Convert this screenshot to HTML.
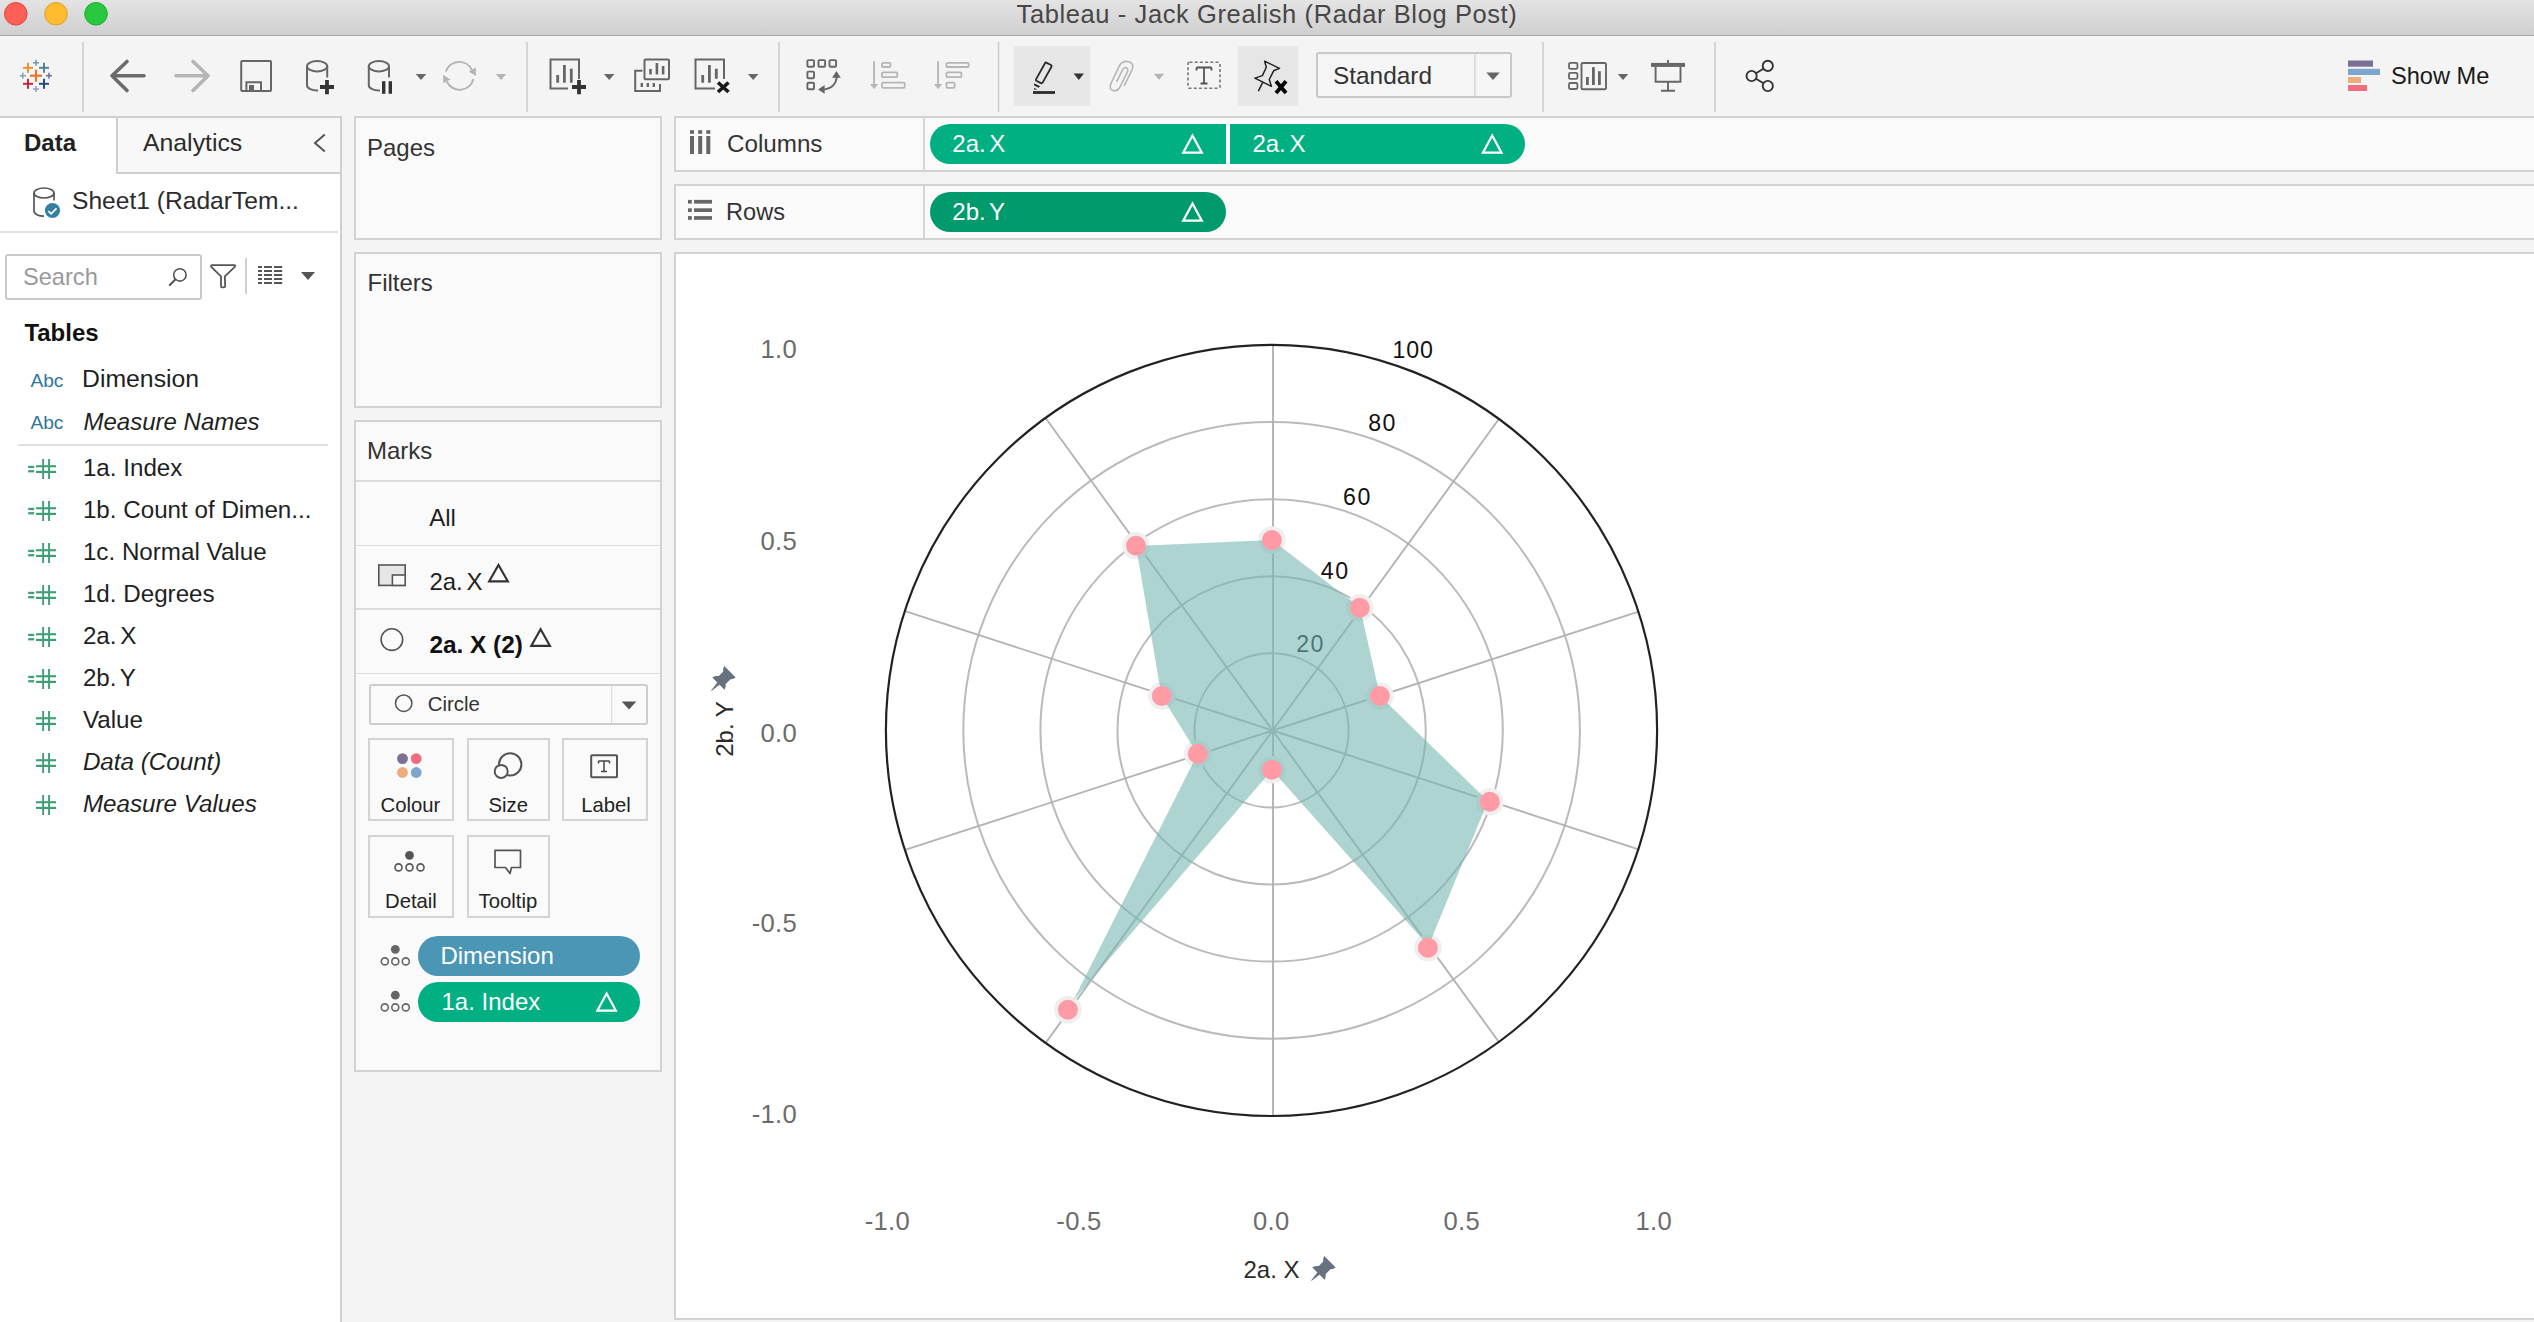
<!DOCTYPE html>
<html><head><meta charset="utf-8"><title>Tableau - Jack Grealish (Radar Blog Post)</title>
<style>
html,body{margin:0;padding:0;width:2534px;height:1322px;overflow:hidden;background:#f4f4f4;}
body{position:relative;font-family:"Liberation Sans", sans-serif;}
.a{position:absolute;}
.t{position:absolute;white-space:pre;font-family:"Liberation Sans", sans-serif;}
svg.ov{position:absolute;left:0;top:0;}
</style></head><body>

<div class="a" style="left:0;top:0;width:2534px;height:35px;background:linear-gradient(#e4e4e4,#cfcfcf);"></div>
<div class="a" style="left:0px;top:35px;width:2534px;height:1px;background:#a9a9a9;"></div>
<div class="a" style="left:0px;top:36px;width:2534px;height:80px;background:#f4f4f4;"></div>
<div class="a" style="left:0px;top:118px;width:2534px;height:1204px;background:#f4f4f4;"></div>
<div class="a" style="left:1014px;top:46px;width:76px;height:60px;background:#e6e6e6;"></div>
<div class="a" style="left:1238px;top:46px;width:60px;height:60px;background:#e6e6e6;"></div>
<div class="a" style="left:1315.8px;top:52px;width:196px;height:46px;background:#f5f5f5;box-sizing:border-box;border:2px solid #c8c8c8;border-radius:3px;"></div>
<div class="a" style="left:1474.2px;top:54px;width:1.5px;height:42px;background:#dddddd;"></div>
<div class="a" style="left:0px;top:118px;width:340px;height:1204px;background:#ffffff;"></div>
<div class="a" style="left:116px;top:116px;width:226px;height:58px;background:#f8f8f8;"></div>
<div class="a" style="left:116px;top:116px;width:2px;height:58px;background:#cfcfcf;"></div>
<div class="a" style="left:116px;top:172px;width:226px;height:2px;background:#cfcfcf;"></div>
<div class="a" style="left:340px;top:116px;width:2px;height:1206px;background:#cfcfcf;"></div>
<div class="a" style="left:0px;top:116px;width:342px;height:2px;background:#cfcfcf;"></div>
<div class="a" style="left:0px;top:231px;width:338px;height:2px;background:#e2e2e2;"></div>
<div class="a" style="left:4.5px;top:254px;width:197.5px;height:46px;background:#ffffff;box-sizing:border-box;border:2px solid #c9c9c9;border-radius:3px;"></div>
<div class="a" style="left:245px;top:258.2px;width:2px;height:35.6px;background:#d0d0d0;"></div>
<div class="a" style="left:18px;top:444px;width:310px;height:2px;background:#e0e0e0;"></div>
<div class="a" style="left:354px;top:116px;width:308px;height:124px;background:#fafafa;box-sizing:border-box;border:2px solid #d2d2d2;"></div>
<div class="a" style="left:354px;top:252px;width:308px;height:156px;background:#fafafa;box-sizing:border-box;border:2px solid #d2d2d2;"></div>
<div class="a" style="left:354px;top:420px;width:308px;height:652px;background:#fafafa;box-sizing:border-box;border:2px solid #d2d2d2;"></div>
<div class="a" style="left:356px;top:480px;width:304px;height:1.5px;background:#dcdcdc;"></div>
<div class="a" style="left:356px;top:544.5px;width:304px;height:1.5px;background:#dcdcdc;"></div>
<div class="a" style="left:356px;top:608.3px;width:304px;height:1.5px;background:#dcdcdc;"></div>
<div class="a" style="left:356px;top:672.5px;width:304px;height:1.5px;background:#dcdcdc;"></div>
<div class="a" style="left:368.5px;top:684px;width:279px;height:41px;background:#fafafa;box-sizing:border-box;border:2px solid #cdcdcd;border-radius:3px;"></div>
<div class="a" style="left:610.5px;top:686px;width:1.5px;height:37px;background:#dadada;"></div>
<div class="a" style="left:368.4px;top:738.4px;width:85.2px;height:83px;background:#fafafa;box-sizing:border-box;border:2px solid #d4d4d4;"></div>
<div class="a" style="left:466.5px;top:738.4px;width:83.3px;height:83px;background:#fafafa;box-sizing:border-box;border:2px solid #d4d4d4;"></div>
<div class="a" style="left:562.4px;top:738.4px;width:85.4px;height:83px;background:#fafafa;box-sizing:border-box;border:2px solid #d4d4d4;"></div>
<div class="a" style="left:368.4px;top:834.6px;width:85.2px;height:83px;background:#fafafa;box-sizing:border-box;border:2px solid #d4d4d4;"></div>
<div class="a" style="left:466.5px;top:834.6px;width:83.3px;height:83px;background:#fafafa;box-sizing:border-box;border:2px solid #d4d4d4;"></div>
<div class="a" style="left:418px;top:936.3px;width:222px;height:39.5px;background:#4a96b4;border-radius:20px;"></div>
<div class="a" style="left:418px;top:982.3px;width:222px;height:39.5px;background:#00b082;border-radius:20px;"></div>
<div class="a" style="left:674px;top:116px;width:1860px;height:56px;background:#fafafa;box-sizing:border-box;border:2px solid #d2d2d2;border-right:none;"></div>
<div class="a" style="left:923px;top:118px;width:1.5px;height:52px;background:#d6d6d6;"></div>
<div class="a" style="left:674px;top:184px;width:1860px;height:56px;background:#fafafa;box-sizing:border-box;border:2px solid #d2d2d2;border-right:none;"></div>
<div class="a" style="left:923px;top:186px;width:1.5px;height:52px;background:#d6d6d6;"></div>
<div class="a" style="left:930px;top:124px;width:295.6px;height:40px;background:#00b082;border-radius:20px 0 0 20px;"></div>
<div class="a" style="left:1230px;top:124px;width:295.4px;height:40px;background:#00b082;border-radius:0 20px 20px 0;"></div>
<div class="a" style="left:930px;top:192px;width:295.6px;height:40px;background:#009a6d;border-radius:20px;"></div>
<div class="a" style="left:674px;top:252px;width:1860px;height:1068px;background:#ffffff;box-sizing:border-box;border:2px solid #d2d2d2;border-right:none;"></div>
<svg class="ov" width="2534" height="1322" viewBox="0 0 2534 1322">
<circle cx="15.8" cy="13.8" r="11.3" fill="#fe5f57" stroke="#e1453f" stroke-width="1"/>
<circle cx="56" cy="13.8" r="11.3" fill="#febc2e" stroke="#dea125" stroke-width="1"/>
<circle cx="96" cy="13.8" r="11.3" fill="#29c840" stroke="#1aab29" stroke-width="1"/>
<rect x="82.25" y="42" width="1.6" height="70" fill="#cdcdcd"/>
<rect x="526.25" y="42" width="1.6" height="70" fill="#cdcdcd"/>
<rect x="778.25" y="42" width="1.6" height="70" fill="#cdcdcd"/>
<rect x="997.75" y="42" width="1.6" height="70" fill="#cdcdcd"/>
<rect x="1542.25" y="42" width="1.6" height="70" fill="#cdcdcd"/>
<rect x="1714.25" y="42" width="1.6" height="70" fill="#cdcdcd"/>
<rect x="30.00" y="74.60" width="12.00" height="2.20" fill="#e8762c"/>
<rect x="34.90" y="69.70" width="2.20" height="12.00" fill="#e8762c"/>
<rect x="23.00" y="66.85" width="10.00" height="1.90" fill="#eb912b"/>
<rect x="27.05" y="62.80" width="1.90" height="10.00" fill="#eb912b"/>
<rect x="39.00" y="66.85" width="10.00" height="1.90" fill="#4e7d99"/>
<rect x="43.05" y="62.80" width="1.90" height="10.00" fill="#4e7d99"/>
<rect x="23.00" y="82.85" width="10.00" height="1.90" fill="#c72037"/>
<rect x="27.05" y="78.80" width="1.90" height="10.00" fill="#c72037"/>
<rect x="39.00" y="82.85" width="10.00" height="1.90" fill="#1f447e"/>
<rect x="43.05" y="78.80" width="1.90" height="10.00" fill="#1f447e"/>
<rect x="33.00" y="62.05" width="6.00" height="1.50" fill="#7299a8"/>
<rect x="35.25" y="59.80" width="1.50" height="6.00" fill="#7299a8"/>
<rect x="19.80" y="74.95" width="6.00" height="1.50" fill="#7fa3ad"/>
<rect x="22.05" y="72.70" width="1.50" height="6.00" fill="#7fa3ad"/>
<rect x="46.00" y="74.95" width="6.00" height="1.50" fill="#6b6fa0"/>
<rect x="48.25" y="72.70" width="1.50" height="6.00" fill="#6b6fa0"/>
<rect x="33.00" y="88.25" width="6.00" height="1.50" fill="#8b9fc6"/>
<rect x="35.25" y="86.00" width="1.50" height="6.00" fill="#8b9fc6"/>
<path d="M144 75.8 H112.5 M127 61.5 L112 75.8 L127 90.5" fill="none" stroke="#6b6b6b" stroke-width="3.6" stroke-linecap="round" stroke-linejoin="round"/>
<path d="M176 75.8 H207.5 M193 61.5 L208 75.8 L193 90.5" fill="none" stroke="#b5b5b5" stroke-width="3.6" stroke-linecap="round" stroke-linejoin="round"/>
<rect x="241.2" y="61" width="29.8" height="30" rx="1" fill="none" stroke="#666" stroke-width="2"/>
<path d="M246.4 91 V82.2 H261 V91" fill="none" stroke="#666" stroke-width="2"/>
<rect x="249" y="85" width="5" height="6.5" fill="#666"/>
<ellipse cx="317.10" cy="66.20" rx="10.10" ry="5.20" fill="none" stroke="#666" stroke-width="2"/>
<path d="M307.00 66.20 V85.30 A10.10 5.20 0 0 0 318.10 90.50" fill="none" stroke="#666" stroke-width="2"/>
<path d="M327.20 66.20 V77.50" fill="none" stroke="#666" stroke-width="2"/>
<path d="M327 80 V94.2 M320 87 H334" stroke="#333" stroke-width="3.8"/>
<ellipse cx="378.90" cy="66.20" rx="10.10" ry="5.20" fill="none" stroke="#666" stroke-width="2"/>
<path d="M368.80 66.20 V85.30 A10.10 5.20 0 0 0 379.90 90.50" fill="none" stroke="#666" stroke-width="2"/>
<path d="M389.00 66.20 V77.50" fill="none" stroke="#666" stroke-width="2"/>
<rect x="382" y="81.2" width="3.4" height="12.6" fill="#333"/><rect x="388.6" y="81.2" width="3.4" height="12.6" fill="#333"/>
<path d="M415.75 74.00 L426.25 74.00 L421.00 80.00 Z" fill="#666"/>
<path d="M445.8 71.5 A14.1 14.1 0 0 1 471.8 69.8 M473.4 79 A14.1 14.1 0 0 1 446.8 81.5" fill="none" stroke="#b3b3b3" stroke-width="1.9"/>
<path d="M468.8 71.6 L475.8 67.6 L475.8 76 Z" fill="#b3b3b3"/><path d="M443.1 74.8 L450.3 79.5 L443.3 83.3 Z" fill="#b3b3b3"/>
<path d="M495.75 74.00 L506.25 74.00 L501.00 80.00 Z" fill="#b5b5b5"/>
<path d="M568 88.6 H550.5 V59.5 H579 V79" fill="none" stroke="#666" stroke-width="2"/>
<rect x="556.3" y="75" width="2.8" height="7.7" fill="#666"/><rect x="563" y="65" width="2.8" height="17.7" fill="#666"/><rect x="569.9" y="68.7" width="2.8" height="14" fill="#666"/>
<path d="M579 80 V94.2 M572 87 H586" stroke="#333" stroke-width="3.8"/>
<path d="M603.95 74.00 L614.45 74.00 L609.20 80.00 Z" fill="#666"/>
<path d="M642.5 70.8 H635.2 V91 H660 V84" fill="none" stroke="#666" stroke-width="2"/>
<rect x="640.6" y="83" width="2.4" height="4" fill="#666"/><rect x="646.6" y="83" width="2.4" height="4" fill="#666"/><rect x="652.6" y="83" width="2.4" height="4" fill="#666"/>
<rect x="644.5" y="59.5" width="24.5" height="19.8" rx="1" fill="none" stroke="#666" stroke-width="2"/>
<rect x="649.2" y="69" width="2.6" height="5.5" fill="#666"/><rect x="655.6" y="63" width="2.6" height="11.5" fill="#666"/><rect x="661.8" y="66" width="2.6" height="8.5" fill="#666"/>
<path d="M715 88.6 H695.5 V59.5 H724 V79" fill="none" stroke="#666" stroke-width="2"/>
<rect x="701.3" y="75" width="2.8" height="7.7" fill="#666"/><rect x="708" y="65" width="2.8" height="17.7" fill="#666"/><rect x="714.9" y="68.7" width="2.8" height="10" fill="#666"/>
<path d="M718 82.5 L728.5 92 M728.5 82.5 L718 92" stroke="#1a1a1a" stroke-width="3.6"/>
<path d="M747.95 74.00 L758.45 74.00 L753.20 80.00 Z" fill="#666"/>
<rect x="807.4" y="60.1" width="6.6" height="6.6" rx="1" fill="none" stroke="#666" stroke-width="1.9"/>
<rect x="818.5" y="60.1" width="6.6" height="6.6" rx="1" fill="none" stroke="#666" stroke-width="1.9"/>
<rect x="829.5" y="60.1" width="6.6" height="6.6" rx="1" fill="none" stroke="#666" stroke-width="1.9"/>
<rect x="807.4" y="71.6" width="6.6" height="6.6" rx="1" fill="none" stroke="#666" stroke-width="1.9"/>
<rect x="807.4" y="82.7" width="6.6" height="6.6" rx="1" fill="none" stroke="#666" stroke-width="1.9"/>
<path d="M824 89.6 Q835.5 88 836.8 77" fill="none" stroke="#666" stroke-width="1.9"/>
<path d="M836.4 71.1 L840.8 77.8 L832.1 77.8 Z" fill="#666"/><path d="M818 89.4 L824.6 85.1 L824.6 93.8 Z" fill="#666"/>
<path d="M874.1 61.3 V87" stroke="#b5b5b5" stroke-width="1.8"/><path d="M870 84 H878.2 L874.1 89 Z" fill="#b5b5b5"/>
<rect x="882" y="62.8" width="8.5" height="4.2" rx="1" fill="none" stroke="#b5b5b5" stroke-width="1.8"/>
<rect x="882" y="72.4" width="15.3" height="4.8" rx="1" fill="none" stroke="#b5b5b5" stroke-width="1.8"/>
<rect x="882" y="82.6" width="22.7" height="5.2" rx="1" fill="none" stroke="#b5b5b5" stroke-width="1.8"/>
<path d="M938.1 61.3 V87" stroke="#b5b5b5" stroke-width="1.8"/><path d="M934 84 H942.2 L938.1 89 Z" fill="#b5b5b5"/>
<rect x="946.4" y="62.8" width="22.3" height="4.2" rx="1" fill="none" stroke="#b5b5b5" stroke-width="1.8"/>
<rect x="946.4" y="72.4" width="15" height="4.8" rx="1" fill="none" stroke="#b5b5b5" stroke-width="1.8"/>
<rect x="946.4" y="82.6" width="8.2" height="5.2" rx="1" fill="none" stroke="#b5b5b5" stroke-width="1.8"/>
<path d="M1046.2 62.6 L1051 65 Q1052 65.6 1051.6 66.5 L1042.6 82.6 Q1042 83.6 1041 83.1 L1036.4 80.8 Q1035.5 80.3 1036 79.4 L1045 63.2 Q1045.5 62.3 1046.2 62.6 Z" fill="none" stroke="#2b2b2b" stroke-width="1.8" stroke-linejoin="round"/>
<path d="M1034.1 83.2 L1040.1 86.2 L1038.6 87.8 L1034.1 85.5 Z" fill="#2b2b2b"/><path d="M1034.1 87.8 L1037.2 89.6 L1034.1 89.8 Z" fill="#2b2b2b"/>
<rect x="1033" y="91.1" width="22" height="2.8" fill="#2b2b2b"/>
<path d="M1073.65 73.50 L1083.95 73.50 L1078.80 80.00 Z" fill="#333"/>
<path d="M1124.4 85.4 L1132 70 Q1134.5 63.5 1129 61.8 Q1123 60 1119.5 65.5 L1111 83.5 Q1108.5 89.5 1113.5 90.6 Q1117.5 91.5 1120 87 L1127.6 71.5 Q1128.5 68 1125.5 67.5 Q1123.5 67.5 1122.5 70 L1116.8 81.3" fill="none" stroke="#b5b5b5" stroke-width="1.6" stroke-linecap="round"/>
<path d="M1153.75 73.80 L1164.25 73.80 L1159.00 79.80 Z" fill="#b5b5b5"/>
<rect x="1188" y="62.3" width="32" height="26" rx="1.5" fill="none" stroke="#777" stroke-width="1.6" stroke-dasharray="3 2.2"/>
<path d="M1196.5 67.5 H1211.5 M1204 67.5 V83.5 M1200.5 83.5 H1207.5 M1196.5 67.5 V70.5 M1211.5 67.5 V70.5" fill="none" stroke="#555" stroke-width="1.8"/>
<path d="M1264.6 61.1 L1279.5 68.4 L1273.6 70.8 L1269.3 79.5 L1271.4 86.3 L1254.9 78.1 L1262.4 75.6 L1266.3 67.3 Z" fill="none" stroke="#222" stroke-width="1.5" stroke-linejoin="round"/>
<path d="M1262.7 82.4 L1258.6 90.7" stroke="#222" stroke-width="1.5" stroke-linecap="round"/>
<path d="M1276 81.2 L1286 93 M1286 81.2 L1276 93" stroke="#000" stroke-width="3.8"/>
<path d="M1486.25 72.50 L1499.75 72.50 L1493.00 80.00 Z" fill="#666"/>
<rect x="1569" y="62.8" width="8.4" height="6" rx="1.2" fill="none" stroke="#666" stroke-width="1.8"/>
<rect x="1569" y="72.9" width="8.4" height="6" rx="1.2" fill="none" stroke="#666" stroke-width="1.8"/>
<rect x="1569" y="83" width="8.4" height="6" rx="1.2" fill="none" stroke="#666" stroke-width="1.8"/>
<rect x="1581.5" y="63" width="24.5" height="26.2" rx="1.3" fill="none" stroke="#666" stroke-width="1.9"/>
<rect x="1586" y="77" width="2.8" height="8" fill="#666"/><rect x="1592" y="67.2" width="2.8" height="17.8" fill="#666"/><rect x="1598" y="71.2" width="2.8" height="13.8" fill="#666"/>
<path d="M1617.75 74.00 L1628.25 74.00 L1623.00 80.00 Z" fill="#666"/>
<rect x="1651" y="62.9" width="34" height="4" fill="#666"/>
<path d="M1655.6 66.5 V81.8 H1680.5 V66.5" fill="none" stroke="#666" stroke-width="1.9"/>
<path d="M1668 60 V63 M1668 82 V90.5 M1661 90.8 H1675" stroke="#666" stroke-width="1.9"/>
<circle cx="1767.8" cy="65.9" r="5.1" fill="none" stroke="#333" stroke-width="1.9"/>
<circle cx="1751.6" cy="76" r="5.1" fill="none" stroke="#333" stroke-width="1.9"/>
<circle cx="1767.8" cy="86" r="5.1" fill="none" stroke="#333" stroke-width="1.9"/>
<path d="M1756 73.2 L1763.5 68.7 M1756 78.8 L1763.5 83.3" stroke="#333" stroke-width="1.9"/>
<rect x="2348" y="60.5" width="25" height="6.2" fill="#7d6e94"/>
<rect x="2348" y="68.8" width="32" height="6.2" fill="#7ea6cc"/>
<rect x="2348" y="77" width="13" height="6" fill="#eeab7c"/>
<rect x="2348" y="85" width="19" height="6" fill="#f16d7f"/>
<path d="M324.8 134.5 L315 143 L324.8 151.5" fill="none" stroke="#555" stroke-width="2"/>
<path d="M34 193 V211 A10 5.2 0 0 0 44 216.2" fill="none" stroke="#555" stroke-width="1.7"/>
<ellipse cx="44" cy="193" rx="10" ry="5" fill="none" stroke="#555" stroke-width="1.7"/>
<path d="M54 193 V200.5" stroke="#555" stroke-width="1.7"/>
<circle cx="52.5" cy="210.5" r="7.6" fill="#337fa0"/>
<path d="M48.3 211 L51.1 213.8 L56.5 208.3" fill="none" stroke="#fff" stroke-width="1.7"/>
<circle cx="179.9" cy="274.9" r="6.2" fill="none" stroke="#555" stroke-width="1.6"/><path d="M175.3 279.5 L169.8 285" stroke="#555" stroke-width="2" stroke-linecap="round"/>
<path d="M212 265.1 H234.3 Q235.8 265.4 234.8 266.8 L224.8 276.3 L225.2 286 Q225 287.3 223.6 287.3 H222.4 Q221 287.3 221 286 V276.3 L211.3 266.8 Q210.5 265.4 212 265.1 Z" fill="none" stroke="#555" stroke-width="1.8" stroke-linejoin="round"/>
<rect x="258" y="266" width="4" height="2" fill="#555"/><rect x="264" y="266" width="8" height="2" fill="#555"/><rect x="274" y="266" width="8.2" height="2" fill="#555"/>
<rect x="258" y="270" width="4" height="2" fill="#555"/><rect x="264" y="270" width="8" height="2" fill="#555"/><rect x="274" y="270" width="8.2" height="2" fill="#555"/>
<rect x="258" y="274" width="4" height="2" fill="#555"/><rect x="264" y="274" width="8" height="2" fill="#555"/><rect x="274" y="274" width="8.2" height="2" fill="#555"/>
<rect x="258" y="278" width="4" height="2" fill="#555"/><rect x="264" y="278" width="8" height="2" fill="#555"/><rect x="274" y="278" width="8.2" height="2" fill="#555"/>
<rect x="258" y="282" width="4" height="2" fill="#555"/><rect x="264" y="282" width="8" height="2" fill="#555"/><rect x="274" y="282" width="8.2" height="2" fill="#555"/>
<path d="M301.00 272.00 L315.00 272.00 L308.00 280.00 Z" fill="#555"/>
<rect x="28.2" y="465.80" width="6" height="2.3" fill="#3f9f76"/><rect x="28.2" y="470.10" width="6" height="2.3" fill="#3f9f76"/>
<rect x="36" y="465.20" width="20" height="2.1" fill="#3f9f76"/><rect x="36" y="470.80" width="20" height="2.2" fill="#3f9f76"/>
<rect x="42.2" y="459.00" width="1.9" height="20" fill="#3f9f76"/><rect x="48.1" y="459.00" width="1.9" height="20" fill="#3f9f76"/>
<rect x="28.2" y="507.80" width="6" height="2.3" fill="#3f9f76"/><rect x="28.2" y="512.10" width="6" height="2.3" fill="#3f9f76"/>
<rect x="36" y="507.20" width="20" height="2.1" fill="#3f9f76"/><rect x="36" y="512.80" width="20" height="2.2" fill="#3f9f76"/>
<rect x="42.2" y="501.00" width="1.9" height="20" fill="#3f9f76"/><rect x="48.1" y="501.00" width="1.9" height="20" fill="#3f9f76"/>
<rect x="28.2" y="549.80" width="6" height="2.3" fill="#3f9f76"/><rect x="28.2" y="554.10" width="6" height="2.3" fill="#3f9f76"/>
<rect x="36" y="549.20" width="20" height="2.1" fill="#3f9f76"/><rect x="36" y="554.80" width="20" height="2.2" fill="#3f9f76"/>
<rect x="42.2" y="543.00" width="1.9" height="20" fill="#3f9f76"/><rect x="48.1" y="543.00" width="1.9" height="20" fill="#3f9f76"/>
<rect x="28.2" y="591.80" width="6" height="2.3" fill="#3f9f76"/><rect x="28.2" y="596.10" width="6" height="2.3" fill="#3f9f76"/>
<rect x="36" y="591.20" width="20" height="2.1" fill="#3f9f76"/><rect x="36" y="596.80" width="20" height="2.2" fill="#3f9f76"/>
<rect x="42.2" y="585.00" width="1.9" height="20" fill="#3f9f76"/><rect x="48.1" y="585.00" width="1.9" height="20" fill="#3f9f76"/>
<rect x="28.2" y="633.80" width="6" height="2.3" fill="#3f9f76"/><rect x="28.2" y="638.10" width="6" height="2.3" fill="#3f9f76"/>
<rect x="36" y="633.20" width="20" height="2.1" fill="#3f9f76"/><rect x="36" y="638.80" width="20" height="2.2" fill="#3f9f76"/>
<rect x="42.2" y="627.00" width="1.9" height="20" fill="#3f9f76"/><rect x="48.1" y="627.00" width="1.9" height="20" fill="#3f9f76"/>
<rect x="28.2" y="675.80" width="6" height="2.3" fill="#3f9f76"/><rect x="28.2" y="680.10" width="6" height="2.3" fill="#3f9f76"/>
<rect x="36" y="675.20" width="20" height="2.1" fill="#3f9f76"/><rect x="36" y="680.80" width="20" height="2.2" fill="#3f9f76"/>
<rect x="42.2" y="669.00" width="1.9" height="20" fill="#3f9f76"/><rect x="48.1" y="669.00" width="1.9" height="20" fill="#3f9f76"/>
<rect x="36" y="717.20" width="20" height="2.1" fill="#3f9f76"/><rect x="36" y="722.80" width="20" height="2.2" fill="#3f9f76"/>
<rect x="42.2" y="711.00" width="1.9" height="20" fill="#3f9f76"/><rect x="48.1" y="711.00" width="1.9" height="20" fill="#3f9f76"/>
<rect x="36" y="759.20" width="20" height="2.1" fill="#3f9f76"/><rect x="36" y="764.80" width="20" height="2.2" fill="#3f9f76"/>
<rect x="42.2" y="753.00" width="1.9" height="20" fill="#3f9f76"/><rect x="48.1" y="753.00" width="1.9" height="20" fill="#3f9f76"/>
<rect x="36" y="801.20" width="20" height="2.1" fill="#3f9f76"/><rect x="36" y="806.80" width="20" height="2.2" fill="#3f9f76"/>
<rect x="42.2" y="795.00" width="1.9" height="20" fill="#3f9f76"/><rect x="48.1" y="795.00" width="1.9" height="20" fill="#3f9f76"/>
<rect x="378.8" y="565" width="26.4" height="20.4" fill="#e6e6e6" stroke="#555" stroke-width="1.6"/>
<rect x="392.4" y="575" width="12.8" height="10.4" fill="#fafafa" stroke="#555" stroke-width="1.6"/>
<path d="M498.5 565 L507.8 581.3 H489.2 Z" fill="none" stroke="#333" stroke-width="2.2" stroke-linejoin="miter"/>
<circle cx="391.9" cy="639.6" r="10.8" fill="none" stroke="#555" stroke-width="1.6"/>
<path d="M540.6 629.2 L549.9 645.8 H531.3 Z" fill="none" stroke="#333" stroke-width="2.2"/>
<circle cx="403.7" cy="703.2" r="8.2" fill="none" stroke="#555" stroke-width="1.5"/>
<path d="M621.75 701.50 L636.25 701.50 L629.00 709.50 Z" fill="#555"/>
<circle cx="402.5" cy="758.6" r="5.4" fill="#7d6e94"/><circle cx="416.2" cy="758.6" r="5.4" fill="#f16d7f"/><circle cx="402.5" cy="772.5" r="5.4" fill="#eeab7c"/><circle cx="416.2" cy="772.5" r="5.4" fill="#7ea6cc"/>
<circle cx="510.2" cy="764.4" r="11.2" fill="none" stroke="#555" stroke-width="2"/><circle cx="501.2" cy="771.4" r="6.5" fill="#fafafa" stroke="#555" stroke-width="2"/>
<rect x="591.2" y="755.2" width="25.8" height="22" rx="0.8" fill="none" stroke="#555" stroke-width="2"/>
<path d="M598.5 761 H609.5 M604 761 V771.5 M601 771.5 H607 M598.5 761 V763.5 M609.5 761 V763.5" fill="none" stroke="#444" stroke-width="1.5"/>
<circle cx="409.5" cy="855.3" r="4.4" fill="#555"/>
<circle cx="398.50" cy="867.4" r="3.5" fill="none" stroke="#555" stroke-width="1.6"/>
<circle cx="409.50" cy="867.4" r="3.5" fill="none" stroke="#555" stroke-width="1.6"/>
<circle cx="420.50" cy="867.4" r="3.5" fill="none" stroke="#555" stroke-width="1.6"/>
<path d="M495 850.3 H520.5 V867.5 H511.5 L510 873.5 L505.5 867.5 H495 Z" fill="none" stroke="#555" stroke-width="1.7" stroke-linejoin="round"/>
<circle cx="395.3" cy="949.3" r="4.4" fill="#666"/>
<circle cx="384.80" cy="961.4" r="3.5" fill="none" stroke="#666" stroke-width="1.6"/>
<circle cx="395.30" cy="961.4" r="3.5" fill="none" stroke="#666" stroke-width="1.6"/>
<circle cx="405.80" cy="961.4" r="3.5" fill="none" stroke="#666" stroke-width="1.6"/>
<circle cx="395.3" cy="995.2" r="4.4" fill="#666"/>
<circle cx="384.80" cy="1007.4" r="3.5" fill="none" stroke="#666" stroke-width="1.6"/>
<circle cx="395.30" cy="1007.4" r="3.5" fill="none" stroke="#666" stroke-width="1.6"/>
<circle cx="405.80" cy="1007.4" r="3.5" fill="none" stroke="#666" stroke-width="1.6"/>
<path d="M606.6 993.5 L615.8 1010.6 H597.4 Z" fill="none" stroke="#fff" stroke-width="2.2"/>
<rect x="690" y="130.2" width="4" height="3.6" fill="#666"/><rect x="690" y="136" width="4" height="18" fill="#666"/>
<rect x="698.2" y="130.2" width="4" height="3.6" fill="#666"/><rect x="698.2" y="136" width="4" height="18" fill="#666"/>
<rect x="706.3" y="130.2" width="4" height="3.6" fill="#666"/><rect x="706.3" y="136" width="4" height="18" fill="#666"/>
<rect x="688" y="199.9" width="3.8" height="3.7" fill="#666"/><rect x="694" y="199.9" width="18" height="3.7" fill="#666"/>
<rect x="688" y="208.3" width="3.8" height="3.7" fill="#666"/><rect x="694" y="208.3" width="18" height="3.7" fill="#666"/>
<rect x="688" y="216.1" width="3.8" height="3.7" fill="#666"/><rect x="694" y="216.1" width="18" height="3.7" fill="#666"/>
<path d="M1192.5 135.5 L1201.8 152.6 H1183.2 Z" fill="none" stroke="#fff" stroke-width="2.2"/>
<path d="M1492.2 135.5 L1501.5 152.6 H1482.9 Z" fill="none" stroke="#fff" stroke-width="2.2"/>
<path d="M1192.5 203.5 L1201.8 220.6 H1183.2 Z" fill="none" stroke="#fff" stroke-width="2.2"/>
<g fill="none" stroke="#bababa" stroke-width="2">
<circle cx="1271.6" cy="730.4" r="77.07"/>
<circle cx="1271.6" cy="730.4" r="154.14"/>
<circle cx="1271.6" cy="730.4" r="231.21"/>
<circle cx="1271.6" cy="730.4" r="308.28"/>
</g>
<g fill="none" stroke="#b3b3b3" stroke-width="1.9">
<line x1="1273" y1="730.5" x2="1273" y2="344.90"/>
<line x1="1272.6" y1="730.5" x2="1499.25" y2="418.54"/>
<line x1="1272.6" y1="730.5" x2="1639.33" y2="611.34"/>
<line x1="1272.6" y1="730.5" x2="1639.33" y2="849.66"/>
<line x1="1272.6" y1="730.5" x2="1499.25" y2="1042.46"/>
<line x1="1273" y1="730.5" x2="1273" y2="1116.10"/>
<line x1="1272.6" y1="730.5" x2="1045.95" y2="1042.46"/>
<line x1="1272.6" y1="730.5" x2="905.87" y2="849.66"/>
<line x1="1272.6" y1="730.5" x2="905.87" y2="611.34"/>
<line x1="1272.6" y1="730.5" x2="1045.95" y2="418.54"/>
</g>
<circle cx="1271.5" cy="730.4" r="385.60" fill="none" stroke="#222" stroke-width="2.2"/>
<text x="1392.4" y="358.4" font-size="23.2" fill="#111" font-family="Liberation Sans, sans-serif" letter-spacing="0.9">100</text>
<text x="1368.2" y="431.4" font-size="23.2" fill="#111" font-family="Liberation Sans, sans-serif" letter-spacing="1.5">80</text>
<text x="1343.1" y="505.1" font-size="23.2" fill="#111" font-family="Liberation Sans, sans-serif" letter-spacing="1.5">60</text>
<text x="1320.8" y="578.7" font-size="23.2" fill="#111" font-family="Liberation Sans, sans-serif" letter-spacing="1.5">40</text>
<text x="1296.2" y="651.9" font-size="23.2" fill="#111" font-family="Liberation Sans, sans-serif" letter-spacing="1.5">20</text>
<circle cx="1271.9" cy="540" r="13.8" fill="#efefef"/>
<circle cx="1359.8" cy="607.7" r="13.8" fill="#efefef"/>
<circle cx="1379.9" cy="696" r="13.8" fill="#efefef"/>
<circle cx="1489.8" cy="801.8" r="13.8" fill="#efefef"/>
<circle cx="1427.9" cy="947.8" r="13.8" fill="#efefef"/>
<circle cx="1271.9" cy="769.8" r="13.8" fill="#efefef"/>
<circle cx="1067.9" cy="1009.8" r="13.8" fill="#efefef"/>
<circle cx="1197.8" cy="753.7" r="13.8" fill="#efefef"/>
<circle cx="1161.8" cy="696" r="13.8" fill="#efefef"/>
<circle cx="1136" cy="545.8" r="13.8" fill="#efefef"/>
<polygon points="1272,540 1360,607.5 1380,696 1488,801 1428.5,946 1272,770 1073,1001 1197.5,754 1161.5,696 1136,546" fill="rgb(118,184,179)" fill-opacity="0.6"/>
<circle cx="1271.9" cy="540" r="10" fill="#ff9ba5"/>
<circle cx="1359.8" cy="607.7" r="10" fill="#ff9ba5"/>
<circle cx="1379.9" cy="696" r="10" fill="#ff9ba5"/>
<circle cx="1489.8" cy="801.8" r="10" fill="#ff9ba5"/>
<circle cx="1427.9" cy="947.8" r="10" fill="#ff9ba5"/>
<circle cx="1271.9" cy="769.8" r="10" fill="#ff9ba5"/>
<circle cx="1067.9" cy="1009.8" r="10" fill="#ff9ba5"/>
<circle cx="1197.8" cy="753.7" r="10" fill="#ff9ba5"/>
<circle cx="1161.8" cy="696" r="10" fill="#ff9ba5"/>
<circle cx="1136" cy="545.8" r="10" fill="#ff9ba5"/>
<g transform="translate(0,0)"><path d="M1324.2 1256.1 L1335.7 1267.6 Q1333 1269.6 1330.5 1269.3 L1325.7 1274 Q1326 1277.5 1324.6 1279.7 L1312.3 1267.4 Q1314.5 1265.8 1318.8 1266.1 L1323.3 1261.5 Q1322.8 1258.5 1324.2 1256.1 Z" fill="#66737f"/><path d="M1318 1272 L1311.6 1280.4 L1320 1274 Z" fill="#66737f" stroke="#66737f" stroke-width="0.8" stroke-linejoin="round"/></g>
<g transform="translate(-600,-590)"><path d="M1324.2 1256.1 L1335.7 1267.6 Q1333 1269.6 1330.5 1269.3 L1325.7 1274 Q1326 1277.5 1324.6 1279.7 L1312.3 1267.4 Q1314.5 1265.8 1318.8 1266.1 L1323.3 1261.5 Q1322.8 1258.5 1324.2 1256.1 Z" fill="#66737f"/><path d="M1318 1272 L1311.6 1280.4 L1320 1274 Z" fill="#66737f" stroke="#66737f" stroke-width="0.8" stroke-linejoin="round"/></g>
</svg>
<div class="t" style="top:1.93px;font-size:25.5px;line-height:25.5px;color:#474747;letter-spacing:0.6px;left:1267.00px;transform:translateX(-50%);">Tableau - Jack Grealish (Radar Blog Post)</div>
<div class="t" style="top:63.56px;font-size:24.4px;line-height:24.4px;color:#333;left:1333.00px;">Standard</div>
<div class="t" style="top:64.94px;font-size:23.6px;line-height:23.6px;color:#1a1a1a;left:2391.00px;">Show Me</div>
<div class="t" style="top:130.90px;font-size:24px;line-height:24px;color:#1f1f1f;font-weight:700;left:24.00px;">Data</div>
<div class="t" style="top:130.92px;font-size:24.8px;line-height:24.8px;color:#2b2b2b;left:143.00px;">Analytics</div>
<div class="t" style="top:189.09px;font-size:24.6px;line-height:24.6px;color:#2b2b2b;left:72.00px;">Sheet1 (RadarTem...</div>
<div class="t" style="top:265.94px;font-size:23.6px;line-height:23.6px;color:#9a9a9a;left:23.00px;">Search</div>
<div class="t" style="top:320.90px;font-size:24px;line-height:24px;color:#111;font-weight:700;left:24.40px;">Tables</div>
<div class="t" style="top:371.48px;font-size:19.2px;line-height:19.2px;color:#31779a;left:30.40px;">Abc</div>
<div class="t" style="top:367.22px;font-size:24.8px;line-height:24.8px;color:#1f1f1f;left:82.00px;">Dimension</div>
<div class="t" style="top:413.48px;font-size:19.2px;line-height:19.2px;color:#31779a;left:30.40px;">Abc</div>
<div class="t" style="top:409.60px;font-size:24px;line-height:24px;color:#1f1f1f;font-style:italic;left:83.50px;">Measure Names</div>
<div class="t" style="top:455.63px;font-size:24.2px;line-height:24.2px;color:#1f1f1f;left:82.90px;">1a. Index</div>
<div class="t" style="top:497.63px;font-size:24.2px;line-height:24.2px;color:#1f1f1f;left:82.90px;">1b. Count of Dimen...</div>
<div class="t" style="top:539.63px;font-size:24.2px;line-height:24.2px;color:#1f1f1f;left:82.90px;">1c. Normal Value</div>
<div class="t" style="top:581.63px;font-size:24.2px;line-height:24.2px;color:#1f1f1f;left:82.90px;">1d. Degrees</div>
<div class="t" style="top:623.63px;font-size:24.2px;line-height:24.2px;color:#1f1f1f;left:82.90px;word-spacing:-3px;">2a. X</div>
<div class="t" style="top:665.63px;font-size:24.2px;line-height:24.2px;color:#1f1f1f;left:82.90px;word-spacing:-3px;">2b. Y</div>
<div class="t" style="top:707.63px;font-size:24.2px;line-height:24.2px;color:#1f1f1f;left:82.90px;">Value</div>
<div class="t" style="top:749.63px;font-size:24.2px;line-height:24.2px;color:#1f1f1f;font-style:italic;left:82.90px;">Data (Count)</div>
<div class="t" style="top:791.63px;font-size:24.2px;line-height:24.2px;color:#1f1f1f;font-style:italic;left:82.90px;">Measure Values</div>
<div class="t" style="top:135.90px;font-size:24px;line-height:24px;color:#333;left:367.00px;">Pages</div>
<div class="t" style="top:271.20px;font-size:24px;line-height:24px;color:#333;left:367.50px;">Filters</div>
<div class="t" style="top:439.40px;font-size:24px;line-height:24px;color:#333;left:367.00px;">Marks</div>
<div class="t" style="top:506.40px;font-size:24px;line-height:24px;color:#1f1f1f;left:429.20px;">All</div>
<div class="t" style="top:570.10px;font-size:24px;line-height:24px;color:#1f1f1f;left:429.40px;word-spacing:-3px;">2a. X</div>
<div class="t" style="top:633.46px;font-size:24.4px;line-height:24.4px;color:#111;font-weight:700;left:429.40px;">2a. X (2)</div>
<div class="t" style="top:694.16px;font-size:20.4px;line-height:20.4px;color:#333;left:427.80px;">Circle</div>
<div class="t" style="top:795.04px;font-size:20.3px;line-height:20.3px;color:#222;left:380.50px;">Colour</div>
<div class="t" style="top:795.04px;font-size:20.3px;line-height:20.3px;color:#222;left:488.50px;">Size</div>
<div class="t" style="top:795.04px;font-size:20.3px;line-height:20.3px;color:#222;left:581.20px;">Label</div>
<div class="t" style="top:891.25px;font-size:20.3px;line-height:20.3px;color:#222;left:385.00px;">Detail</div>
<div class="t" style="top:891.25px;font-size:20.3px;line-height:20.3px;color:#222;left:478.60px;">Tooltip</div>
<div class="t" style="top:943.60px;font-size:24px;line-height:24px;color:#fff;left:440.40px;">Dimension</div>
<div class="t" style="top:989.90px;font-size:24px;line-height:24px;color:#fff;left:441.50px;">1a. Index</div>
<div class="t" style="top:132.13px;font-size:24.2px;line-height:24.2px;color:#333;left:727.00px;">Columns</div>
<div class="t" style="top:200.64px;font-size:23.6px;line-height:23.6px;color:#333;left:726.00px;">Rows</div>
<div class="t" style="top:131.90px;font-size:24px;line-height:24px;color:#fff;left:952.30px;word-spacing:-3px;">2a. X</div>
<div class="t" style="top:131.90px;font-size:24px;line-height:24px;color:#fff;left:1252.40px;word-spacing:-3px;">2a. X</div>
<div class="t" style="top:199.90px;font-size:24px;line-height:24px;color:#fff;left:952.30px;word-spacing:-3px;">2b. Y</div>
<div class="t" style="top:336.74px;font-size:25.6px;line-height:25.6px;color:#6b6b6b;letter-spacing:0.3px;right:1737.00px;">1.0</div>
<div class="t" style="top:528.84px;font-size:25.6px;line-height:25.6px;color:#6b6b6b;letter-spacing:0.3px;right:1737.00px;">0.5</div>
<div class="t" style="top:720.54px;font-size:25.6px;line-height:25.6px;color:#6b6b6b;letter-spacing:0.3px;right:1737.00px;">0.0</div>
<div class="t" style="top:910.54px;font-size:25.6px;line-height:25.6px;color:#6b6b6b;letter-spacing:0.3px;right:1737.00px;">-0.5</div>
<div class="t" style="top:1102.24px;font-size:25.6px;line-height:25.6px;color:#6b6b6b;letter-spacing:0.3px;right:1737.00px;">-1.0</div>
<div class="t" style="top:1209.24px;font-size:25.6px;line-height:25.6px;color:#6b6b6b;letter-spacing:0.3px;left:887.40px;transform:translateX(-50%);">-1.0</div>
<div class="t" style="top:1209.24px;font-size:25.6px;line-height:25.6px;color:#6b6b6b;letter-spacing:0.3px;left:1079.00px;transform:translateX(-50%);">-0.5</div>
<div class="t" style="top:1209.24px;font-size:25.6px;line-height:25.6px;color:#6b6b6b;letter-spacing:0.3px;left:1271.30px;transform:translateX(-50%);">0.0</div>
<div class="t" style="top:1209.24px;font-size:25.6px;line-height:25.6px;color:#6b6b6b;letter-spacing:0.3px;left:1461.70px;transform:translateX(-50%);">0.5</div>
<div class="t" style="top:1209.24px;font-size:25.6px;line-height:25.6px;color:#6b6b6b;letter-spacing:0.3px;left:1653.70px;transform:translateX(-50%);">1.0</div>
<div class="t" style="top:1257.50px;font-size:24px;line-height:24px;color:#2a2a2a;left:1243.50px;">2a. X</div>
<div class="t" style="left:695px;top:717px;width:60px;font-size:24px;line-height:24px;color:#2a2a2a;transform:rotate(-90deg);text-align:center;">2b. Y</div>
</body></html>
